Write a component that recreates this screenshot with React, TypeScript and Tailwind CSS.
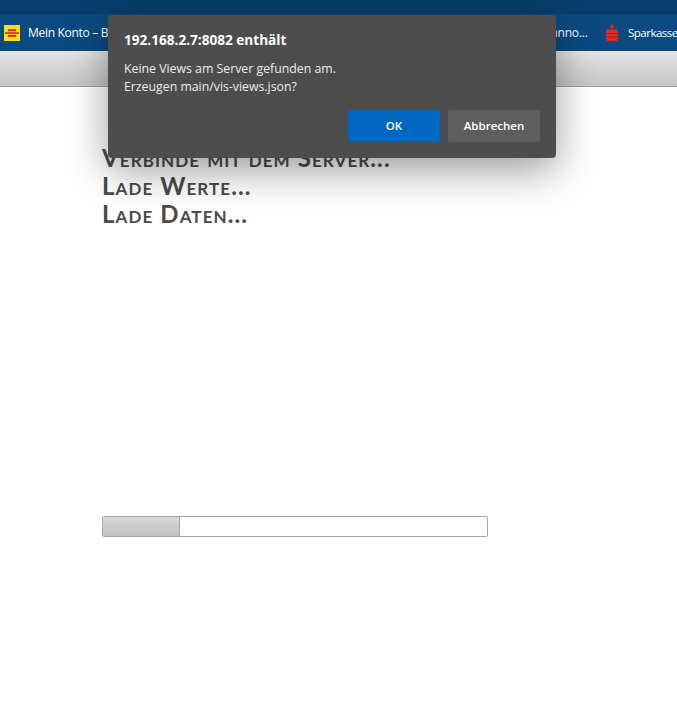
export default function App() {
  return (
    <div className="relative min-h-[704px] bg-white font-['Open_Sans','Noto_Sans',sans-serif] overflow-hidden">
      {/* Browser chrome */}
      <div className="h-[14px] bg-[#063f6c]" />
      <div className="h-[37px] bg-[#0b4a80] flex items-center text-white text-[12px] overflow-hidden whitespace-nowrap">
        <div className="flex items-center pl-1 w-[551px] shrink-0">
          <svg width="16" height="16" viewBox="0 0 16 16" className="shrink-0">
            <rect width="16" height="16" fill="#f7e017" />
            <rect x="1" y="7.2" width="14" height="1.6" fill="#d9261c" />
            <rect x="4" y="4.2" width="8" height="2" fill="#d9261c" />
            <rect x="4" y="9.8" width="8" height="2" fill="#d9261c" />
          </svg>
          <span className="ml-2 tracking-[-0.3px]">Mein Konto – Bank</span>
        </div>
        <span className="w-[54px] shrink-0 tracking-[-0.2px]">anno...</span>
        <div className="flex items-center shrink-0">
          <svg width="14" height="18" viewBox="0 0 14 18" className="shrink-0">
            <circle cx="7" cy="2.5" r="2" fill="#e2291c" />
            <path d="M1 7 Q1 5.5 3 5.5 H11 Q13 5.5 13 7 V15 Q13 17 11 17 H3 Q1 17 1 15 Z" fill="#e2291c" />
            <rect x="1" y="9" width="12" height="1" fill="#8e2a20" />
            <rect x="1" y="12.5" width="12" height="1" fill="#8e2a20" />
          </svg>
          <span className="ml-[9px] text-[11.5px] tracking-[-0.5px]">Sparkasse</span>
        </div>
      </div>
      <div className="h-[36px] bg-gradient-to-b from-[#e4e4e4] to-[#c6c6c6] border-b border-[#9f9f9f]" />

      {/* Page content */}
      <div className="pl-[102px] pt-[57px]">
        <div className="font-['Lato',sans-serif] font-bold text-[24px] leading-[28px] tracking-[1.1px] text-[#4a4a4a] [font-variant:small-caps]">
          <div>Verbinde mit dem Server...</div>
          <div>Lade Werte...</div>
          <div>Lade Daten...</div>
        </div>
        <div className="mt-[288px] w-[386px] h-[21px] border border-[#a6a6a6] rounded-[2px] bg-white overflow-hidden">
          <div className="w-[77px] h-full bg-gradient-to-b from-[#d6d6d6] to-[#c4c4c4] border-r border-[#a6a6a6]" />
        </div>
      </div>

      {/* Alert dialog */}
      <div className="absolute left-[108px] top-[15px] w-[448px] h-[143px] bg-[#4d4d4d] rounded-[4px] shadow-[0_12px_40px_rgba(0,0,0,0.4)] px-4 pt-[15px] text-white">
        <div className="text-[13.6px] font-bold leading-[20px]">192.168.2.7:8082 enthält</div>
        <div className="mt-[10px] text-[12.3px] leading-[18px] text-[#ececec]">
          <div>Keine Views am Server gefunden am.</div>
          <div>Erzeugen main/vis-views.json?</div>
        </div>
        <div className="mt-[14px] flex justify-end gap-2">
          <button className="w-[92px] h-[32px] bg-[#0067c0] rounded-[2px] text-[11.5px] font-semibold text-white">OK</button>
          <button className="w-[92px] h-[32px] bg-[#5e5e5e] rounded-[2px] text-[11.5px] font-semibold text-white">Abbrechen</button>
        </div>
      </div>
    </div>
  )
}
